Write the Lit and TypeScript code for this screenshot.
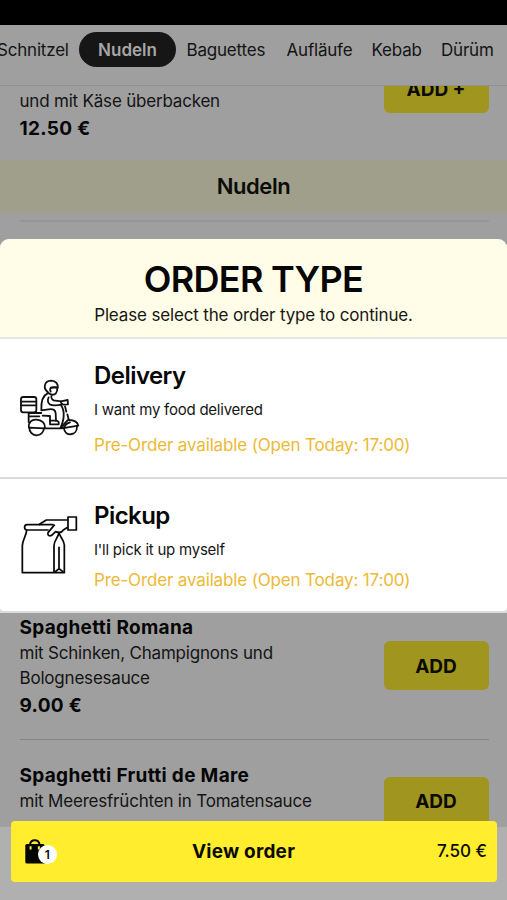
import { LitElement, html, css, svg } from "lit";
import { customElement, property } from "lit/decorators.js";
import { classMap } from "lit/directives/class-map.js";

const scooter = svg`<svg width="62" height="60" viewBox="57 57 186 180" fill="none" stroke="#101010" stroke-width="5.4" stroke-linejoin="round" stroke-linecap="round">
  <path d="M141 94C130 84 132 63 153 62C168 62 175 73 173 83H153C150 85 150 90 152 95"/>
  <path d="M172 84C172 98 166 105 157 104C150 104 144 99 141 94M173 83C170 81 160 80 153 83"/>
  <path d="M143 100C129 106 123 126 124 151L146 148C160 146 167 150 167 161L168 182C176 182 177 187 176 193H150V168L128 167"/>
  <path d="M155 106C152 113 157 119 161 121L183 124M146 112C142 119 143 129 149 133C160 138 174 136 186 133"/>
  <path d="M183 124L203 120L204 133L189 134L183 128Z"/>
  <path d="M150 182H168"/>
  <rect x="63" y="111" width="46" height="46" rx="7"/>
  <path d="M63 125H109M63 136H109"/>
  <path d="M86 159H124M86 159V186M90 169H118"/>
  <path d="M87 203C84 187 95 178 109 179C126 180 136 190 135 204"/>
  <path d="M88 203A22 22 0 0 0 132 205Z"/>
  <path d="M132 205H181C187 191 191 180 191 168C192 154 188 143 183 136"/>
  <path d="M195 139L199 155M202 163L206 178C200 184 191 191 184 204"/>
  <path d="M206 180C220 180 232 185 235 197L185 205M210 187C198 190 194 198 192 203"/>
  <path d="M192 205C194 230 231 229 231 200"/>
</svg>`;

const paperBag = svg`<svg width="58" height="60" viewBox="62 44 174 180" fill="none" stroke="#080808" stroke-width="5.2" stroke-linejoin="round" stroke-linecap="butt">
  <path d="M163 73H84C72 74 74 89 84 89H148"/>
  <path d="M82 90C80 109 70 117 69 136V217H195V134C194 118 182 111 179 97"/>
  <path d="M179 97C176 113 164 120 164 136V217"/>
  <path d="M179 139V205M167 215L179 205L192 215"/>
  <path d="M118 73L141 59H205"/>
  <path d="M166 73L146 97C144 106 151 109 157 105L169 94C179 98 188 96 192 89L205 81"/>
  <path d="M206 50H231V89H206Z"/>
</svg>`;

const shoppingBag = svg`<svg width="20" height="25" viewBox="0 0 20 25">
  <path d="M5 6C5 -0.500 14.500 -0.500 14.500 6" fill="none" stroke="#060600" stroke-width="2"/>
  <path d="M2 5H18Q19.500 5 19.500 6.500V24.500H2Q0.300 24.500 0.300 23V6.500Q0.300 5 2 5Z" fill="#060600"/>
  <path d="M5.600 7.200V10.600M13.900 7.200V10.600" stroke="#ffed2e" stroke-width="2"/>
</svg>`;

@customElement("menu-item")
class MenuItem extends LitElement {
  @property() name = "";
  @property({ attribute: false }) lines: string[] = [];
  @property() price = "";
  @property() action = "ADD";

  static styles = css`
    :host { display: flex; align-items: center; justify-content: space-between; margin: 0 18.5px 0 19.5px; color: #141414; }
    .info { padding-top: 1px; margin-bottom: -1px; }
    .name { height: 27px; line-height: 28px; font-size: 19px; font-weight: 700; color: #060606; letter-spacing: 0.32px; }
    .line { height: 24.5px; line-height: 24.5px; font-size: 17px; letter-spacing: -0.2px; }
    .price { height: 31px; line-height: 32px; font-size: 19px; font-weight: 700; color: #060606; letter-spacing: 0.3px; }
    .add { width: 105px; height: 48.5px; margin-bottom: 2px; border: 0; padding: 1px 0 0; border-radius: 6px; background: #a0951f; color: #0c0b02; font: 700 19px Inter, sans-serif; flex: none; }
  `;

  render() {
    return html`<div class="info">
        <div class="name">${this.name}</div>
        ${this.lines.map((l) => html`<div class="line">${l}</div>`)}
        <div class="price">${this.price}</div>
      </div>
      <button class="add">${this.action}</button>`;
  }
}

@customElement("order-option")
class OrderOption extends LitElement {
  @property() kind = "";
  @property() heading = "";
  @property() text = "";
  @property() note = "";

  static styles = css`
    :host { display: grid; grid-template-columns: 94px 1fr; background: #fff; box-sizing: border-box; }
    .icon { padding-left: 19px; }
    .delivery { padding-top: 40.5px; }
    .pickup { padding: 36px 0 0 20.3px; }
    svg { display: block; }
    .heading { margin-top: 21px; height: 32px; line-height: 32px; font-size: 24px; font-weight: 600; letter-spacing: -0.55px; color: #080808; }
    .text { margin-top: 7px; height: 22px; line-height: 22px; font-size: 15px; letter-spacing: -0.24px; color: #161616; }
    .note { margin-top: 12px; height: 24px; line-height: 24px; font-size: 17px; letter-spacing: -0.15px; color: #edb935; }
    .tight { margin-top: 7px; }
  `;

  render() {
    const pickup = this.kind === "pickup";
    return html`<div class=${classMap({ icon: true, pickup, delivery: !pickup })}>${pickup ? paperBag : scooter}</div>
      <div>
        <div class="heading">${this.heading}</div>
        <div class="text">${this.text}</div>
        <div class=${classMap({ note: true, tight: pickup })}>${this.note}</div>
      </div>`;
  }
}

@customElement("app-root")
class AppRoot extends LitElement {
  static styles = css`
    :host { display: flex; flex-direction: column; position: relative; width: 507px; height: 900px; overflow: hidden; background: #9f9f9f; font-family: Inter, "Liberation Sans", sans-serif; color: #141414; }
    .status { height: 25px; flex: none; background: #000; }
    .tabs { height: 61px; flex: none; display: flex; align-items: flex-start; padding-top: 7px; box-sizing: border-box; border-bottom: 1px solid #919191; white-space: nowrap; font-size: 17px; line-height: 37px; letter-spacing: -0.2px; }
    .tab { flex: none; }
    .schnitzel { margin-left: -3px; width: 82px; }
    .active { width: 97px; height: 35px; margin-right: 10.5px; border-radius: 18px; background: #161616; color: #a6a6a6; font-weight: 600; text-align: center; letter-spacing: 0; }
    .baguettes { width: 100px; }
    .auflaufe { width: 85px; }
    .kebab { width: 69.5px; }
    .menu { flex: 1; min-height: 0; overflow: hidden; }
    .first { margin-top: -50px; }
    .section { margin-top: 16.5px; height: 53px; line-height: 53px; background: #9f9f8b; text-align: center; font-size: 22px; font-weight: 600; letter-spacing: -0.4px; color: #0c0c08; }
    .rule { height: 1px; margin: 0 18.5px 0 19.5px; background: #858585; }
    .rule.top { height: 2px; margin-top: 7.5px; margin-bottom: 391px; background: #949594; }
    .rule.mid { margin-top: 19px; margin-bottom: 21px; }
    .sheet { position: absolute; left: 0; top: 238.500px; width: 507px; height: 374.500px; display: flex; flex-direction: column; border-radius: 9px 9px 0 0; overflow: hidden; background: #dcdcdc; }
    .head { height: 98px; flex: none; background: #fffde8; text-align: center; border-bottom: 2px solid #e6e6e6; box-sizing: content-box; }
    .title { padding-top: 19px; height: 42px; line-height: 42px; font-size: 36px; font-weight: 600; color: #060606; letter-spacing: -0.7px; }
    .sub { height: 24px; line-height: 24px; margin-top: 3px; font-size: 17px; letter-spacing: -0.15px; color: #171713; }
    .opt1 { height: 138px; flex: none; }
    .opt2 { height: 132.500px; flex: none; margin-top: 2px; border-radius: 0 0 4px 4px; }
    .footer { position: absolute; left: 0; top: 827px; width: 507px; height: 73px; background: #b0b0b0; }
    .order { position: absolute; left: 10.500px; top: 820.500px; width: 486.500px; height: 61px; box-sizing: border-box; padding: 0 10px 0 14.500px; display: grid; grid-template-columns: 55px 1fr 80px; align-items: center; border-radius: 4px; background: #ffed2e; color: #0b0b02; }
    .bag { position: relative; height: 25px; }
    .bag svg { display: block; }
    .count { position: absolute; left: 12.500px; top: 6px; width: 19.500px; height: 19.500px; border-radius: 50%; background: #fff; text-align: center; font-size: 12px; line-height: 20px; font-weight: 600; }
    .label { text-align: center; font-size: 19px; font-weight: 650; letter-spacing: 0.22px; padding-top: 1px; }
    .total { text-align: right; font-size: 17px; font-weight: 550; }
  `;

  render() {
    return html`
      <div class="status"></div>
      <nav class="tabs">
        <span class="tab schnitzel">Schnitzel</span>
        <span class="tab active">Nudeln</span>
        <span class="tab baguettes">Baguettes</span>
        <span class="tab auflaufe">Aufläufe</span>
        <span class="tab kebab">Kebab</span>
        <span class="tab">Dürüm</span>
      </nav>
      <main class="menu">
        <menu-item class="first" .lines=${["\u00a0", "und mit Käse überbacken"]} price="12.50 €" action="ADD +"></menu-item>
        <div class="section">Nudeln</div>
        <div class="rule top"></div>
        <menu-item name="Spaghetti Romana" .lines=${["mit Schinken, Champignons und", "Bolognesesauce"]} price="9.00 €"></menu-item>
        <div class="rule mid"></div>
        <menu-item name="Spaghetti Frutti de Mare" .lines=${["mit Meeresfrüchten in Tomatensauce"]}></menu-item>
      </main>
      <section class="sheet">
        <header class="head">
          <div class="title">ORDER TYPE</div>
          <div class="sub">Please select the order type to continue.</div>
        </header>
        <order-option class="opt1" kind="delivery" heading="Delivery" text="I want my food delivered" note="Pre-Order available (Open Today: 17:00)"></order-option>
        <order-option class="opt2" kind="pickup" heading="Pickup" text="I'll pick it up myself" note="Pre-Order available (Open Today: 17:00)"></order-option>
      </section>
      <div class="footer"></div>
      <div class="order">
        <div class="bag">${shoppingBag}<span class="count">1</span></div>
        <div class="label">View order</div>
        <div class="total">7.50 €</div>
      </div>`;
  }
}
